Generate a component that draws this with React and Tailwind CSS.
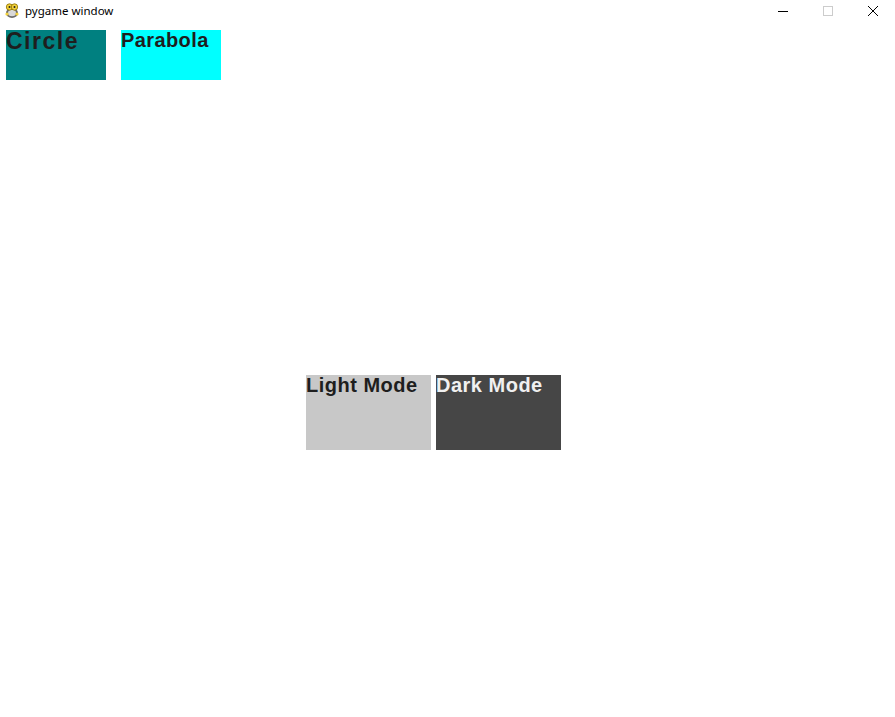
import React from "react";

const PygameIcon = () => (
  <svg width="16" height="16" viewBox="0 0 16 16">
    <ellipse cx="8" cy="10" rx="6" ry="5" fill="#6b6b6b" />
    <ellipse cx="8" cy="10" rx="4" ry="3.2" fill="#d9d9d9" />
    <circle cx="5.5" cy="4" r="3.2" fill="#f2d13a" stroke="#8a6d00" strokeWidth="0.8" />
    <circle cx="10.5" cy="4" r="3.2" fill="#f2d13a" stroke="#8a6d00" strokeWidth="0.8" />
    <circle cx="5.5" cy="4" r="1" fill="#222" />
    <circle cx="10.5" cy="4" r="1" fill="#222" />
    <circle cx="3" cy="11" r="1.6" fill="#f2d13a" />
    <circle cx="13" cy="11" r="1.6" fill="#f2d13a" />
  </svg>
);

const Button = ({ label, className, textClass }) => (
  <div className={`absolute ${className}`}>
    <span className={`block font-bold leading-none whitespace-nowrap ${textClass}`}>{label}</span>
  </div>
);

export default function App() {
  return (
    <div
      className="w-[895px] h-[717px] bg-white overflow-hidden flex flex-col"
      style={{ fontFamily: '"Liberation Sans", Arial, sans-serif' }}
    >
      <div className="h-[22px] flex items-center shrink-0">
        <div className="pl-[4px] pr-[5px] flex items-center">
          <PygameIcon />
        </div>
        <span className="text-[11.5px] text-black" style={{ fontFamily: '"Noto Sans", "Liberation Sans", sans-serif' }}>
          pygame window
        </span>
        <div className="ml-auto flex items-center h-full">
          <div className="w-[45px] h-full flex items-center justify-center">
            <div className="w-[10px] h-px bg-black" />
          </div>
          <div className="w-[45px] h-full flex items-center justify-center">
            <div className="w-[10px] h-[10px] border border-[#cccccc]" />
          </div>
          <div className="w-[45px] h-full flex items-center justify-center">
            <svg width="12" height="12" viewBox="0 0 12 12">
              <path d="M1 1 L11 11 M11 1 L1 11" stroke="#000" strokeWidth="1" />
            </svg>
          </div>
        </div>
      </div>
      <div className="relative flex-1 bg-white">
        <Button
          label="Circle"
          className="left-[6px] top-[8px] w-[100px] h-[50px] bg-[#008080]"
          textClass="text-[23px] tracking-[1.5px] text-[#1e1e1e]"
        />
        <Button
          label="Parabola"
          className="left-[121px] top-[8px] w-[100px] h-[50px] bg-[#00ffff]"
          textClass="text-[20px] tracking-[0.4px] text-[#1e1e1e]"
        />
        <Button
          label="Light Mode"
          className="left-[306px] top-[353px] w-[125px] h-[75px] bg-[#c8c8c8]"
          textClass="text-[20px] tracking-[0.5px] text-[#1e1e1e]"
        />
        <Button
          label="Dark Mode"
          className="left-[436px] top-[353px] w-[125px] h-[75px] bg-[#464646]"
          textClass="text-[20px] tracking-[0.5px] text-[#f0f0f0]"
        />
      </div>
    </div>
  );
}
